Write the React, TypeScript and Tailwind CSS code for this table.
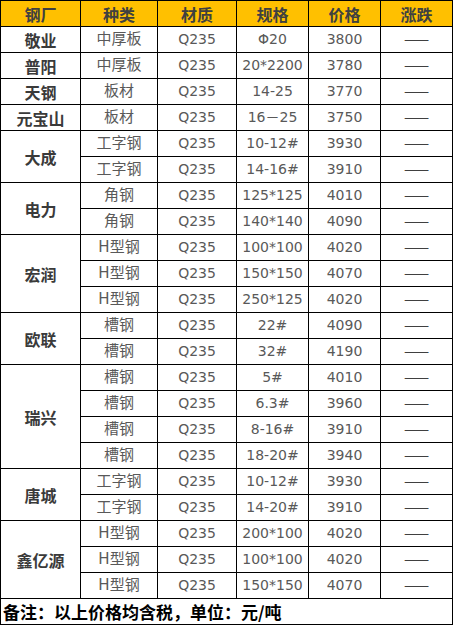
import React from "react";

type Row = { t: string; s: string; p: string };
type Group = { name: string; rows: Row[] };

const groups: Group[] = [
  { name: "敬业", rows: [{ t: "中厚板", s: "Φ20", p: "3800" }] },
  { name: "普阳", rows: [{ t: "中厚板", s: "20*2200", p: "3780" }] },
  { name: "天钢", rows: [{ t: "板材", s: "14-25", p: "3770" }] },
  { name: "元宝山", rows: [{ t: "板材", s: "16－25", p: "3750" }] },
  {
    name: "大成",
    rows: [
      { t: "工字钢", s: "10-12#", p: "3930" },
      { t: "工字钢", s: "14-16#", p: "3910" },
    ],
  },
  {
    name: "电力",
    rows: [
      { t: "角钢", s: "125*125", p: "4010" },
      { t: "角钢", s: "140*140", p: "4090" },
    ],
  },
  {
    name: "宏润",
    rows: [
      { t: "H型钢", s: "100*100", p: "4020" },
      { t: "H型钢", s: "150*150", p: "4070" },
      { t: "H型钢", s: "250*125", p: "4020" },
    ],
  },
  {
    name: "欧联",
    rows: [
      { t: "槽钢", s: "22#", p: "4090" },
      { t: "槽钢", s: "32#", p: "4190" },
    ],
  },
  {
    name: "瑞兴",
    rows: [
      { t: "槽钢", s: "5#", p: "4010" },
      { t: "槽钢", s: "6.3#", p: "3960" },
      { t: "槽钢", s: "8-16#", p: "3910" },
      { t: "槽钢", s: "18-20#", p: "3940" },
    ],
  },
  {
    name: "唐城",
    rows: [
      { t: "工字钢", s: "10-12#", p: "3930" },
      { t: "工字钢", s: "14-20#", p: "3910" },
    ],
  },
  {
    name: "鑫亿源",
    rows: [
      { t: "H型钢", s: "200*100", p: "4020" },
      { t: "H型钢", s: "100*100", p: "4020" },
      { t: "H型钢", s: "150*150", p: "4070" },
    ],
  },
];

const spanClass: Record<number, string> = {
  1: "row-span-1",
  2: "row-span-2",
  3: "row-span-3",
  4: "row-span-4",
};

const cell =
  "bg-white flex items-center justify-center text-[#595959] whitespace-nowrap";

export default function App() {
  const headers = ["钢厂", "种类", "材质", "规格", "价格", "涨跌"];
  return (
    <div className="w-[453px] h-[625px] bg-black p-px grid grid-cols-[79px_76px_78px_71px_71px_71px] auto-rows-[25px] gap-px font-['DejaVu_Sans','Noto_Sans_CJK_SC',sans-serif]">
      {headers.map((h) => (
        <div
          key={h}
          className="bg-[#FFC000] flex items-center justify-center text-[16px] font-bold text-[#404040] font-['Noto_Sans_CJK_SC',sans-serif]"
        >
          {h}
        </div>
      ))}
      {groups.map((g) => (
        <React.Fragment key={g.name}>
          <div
            className={`${spanClass[g.rows.length]} bg-white flex items-center justify-center text-[16px] font-bold text-[#3a3a3a] font-['Noto_Sans_CJK_SC',sans-serif]`}
          >
            {g.name}
          </div>
          {g.rows.map((r, i) => (
            <React.Fragment key={i}>
              <div className={`${cell} text-[15px]`}>{r.t}</div>
              <div className={`${cell} text-[14px]`}>Q235</div>
              <div className={`${cell} text-[14px]`}>{r.s}</div>
              <div className={`${cell} text-[14px]`}>{r.p}</div>
              <div className="bg-white flex items-center justify-center whitespace-nowrap text-[15px] text-[#404040] font-['Noto_Sans_CJK_SC',sans-serif]">
                ——
              </div>
            </React.Fragment>
          ))}
        </React.Fragment>
      ))}
      <div className="col-span-6 bg-white flex items-center pl-[2px] text-[17px] font-bold text-black whitespace-nowrap font-['Noto_Sans_CJK_SC',sans-serif]">
        备注：以上价格均含税，单位：元/吨
      </div>
    </div>
  );
}
